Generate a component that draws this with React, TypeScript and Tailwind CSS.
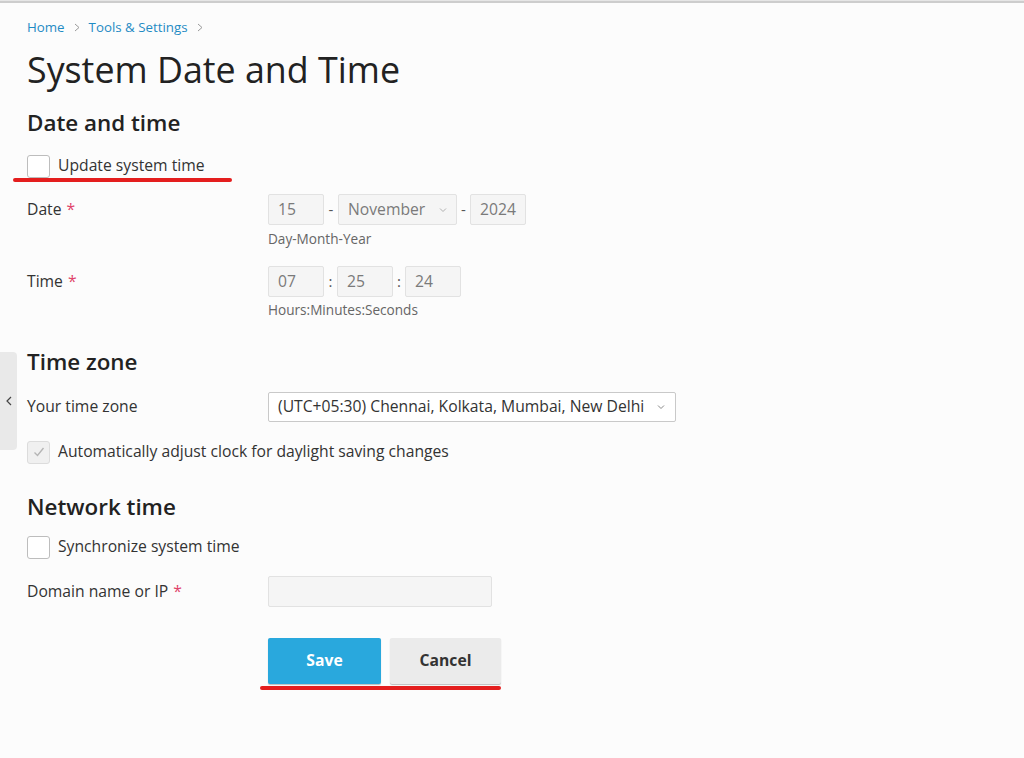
import React from "react";

const Chevron = ({ className = "" }: { className?: string }) => (
  <svg width="8" height="8" viewBox="0 0 8 8" className={className} fill="none" stroke="currentColor" strokeWidth="1">
    <path d="M1 2.5 L4 5.5 L7 2.5" />
  </svg>
);

const Box = ({ children, w }: { children: React.ReactNode; w: string }) => (
  <div className={`${w} h-[31px] border border-[#e2e2e2] bg-[#f5f5f5] rounded-[2px] flex items-center px-[9px] text-[15.7px] text-[#7a7a7a]`}>
    {children}
  </div>
);

const Star = () => <span className="text-[#e0436a] ml-[5px] text-[15.7px]">*</span>;

const Checkbox = ({ checked = false, disabled = false }: { checked?: boolean; disabled?: boolean }) => (
  <div
    className={`w-[23px] h-[23px] rounded-[3px] border flex items-center justify-center shrink-0 ${
      disabled ? "bg-[#f0f0f0] border-[#dcdcdc]" : "bg-white border-[#bdbdbd]"
    }`}
  >
    {checked && (
      <svg width="14" height="14" viewBox="0 0 14 14" fill="none" stroke="#b5b5b5" strokeWidth="1.4">
        <path d="M2.5 7.5 L5.5 10.5 L11.5 3" />
      </svg>
    )}
  </div>
);

export default function App() {
  return (
    <div
      className="relative w-[1024px] h-[758px] overflow-hidden bg-[#fcfcfc] text-[#333]"
      style={{ fontFamily: '"Open Sans", "Noto Sans", sans-serif' }}
    >
      <div className="h-[1px] bg-[#e6e6e6]" />
      <div className="h-[2px] bg-[#cdcdcd]" />

      {/* left collapse tab */}
      <div className="absolute left-0 top-[352px] w-[17px] h-[98px] bg-[#e9e9e9] rounded-r-[4px] flex items-center justify-center text-[#444]">
        <svg width="6" height="10" viewBox="0 0 6 10" fill="none" stroke="currentColor" strokeWidth="1.2">
          <path d="M5 1 L1 5 L5 9" />
        </svg>
      </div>

      <div className="pl-[27px]">
        {/* breadcrumb */}
        <div className="mt-[15px] flex items-center text-[13.3px] leading-[18px] text-[#1f8bc4]">
          <span>Home</span>
          <svg width="6" height="9" viewBox="0 0 6 9" className="mx-[9px]" fill="none" stroke="#9a9a9a" strokeWidth="1">
            <path d="M1 1 L5 4.5 L1 8" />
          </svg>
          <span>Tools &amp; Settings</span>
          <svg width="6" height="9" viewBox="0 0 6 9" className="mx-[9px]" fill="none" stroke="#9a9a9a" strokeWidth="1">
            <path d="M1 1 L5 4.5 L1 8" />
          </svg>
        </div>

        <h1 className="mt-[12px] text-[35.8px] leading-[43px] font-normal text-[#222]">System Date and Time</h1>

        <h2 className="mt-[17px] text-[22.4px] leading-[30px] font-semibold text-[#222]">Date and time</h2>

        <div className="relative mt-[16px] flex items-center h-[24px]">
          <Checkbox />
          <span className="ml-[8px] text-[15.7px]">Update system time</span>
          <div className="absolute left-[-14px] top-[24px] w-[219px] h-[4px] rounded-full bg-[#e41e1e]" />
        </div>

        {/* Date */}
        <div className="mt-[16px] flex items-center">
          <div className="w-[241px] text-[15.7px] flex items-center">Date<Star /></div>
          <Box w="w-[56px]">15</Box>
          <span className="w-[14px] text-center text-[15px] text-[#555]">-</span>
          <div className="w-[119px] h-[31px] border border-[#e2e2e2] bg-[#f5f5f5] rounded-[2px] flex items-center justify-between px-[9px] text-[15.7px] text-[#7a7a7a]">
            <span>November</span>
            <Chevron className="text-[#b0b0b0]" />
          </div>
          <span className="w-[13px] text-center text-[15px] text-[#555]">-</span>
          <Box w="w-[56px]">2024</Box>
        </div>
        <div className="mt-[5px] ml-[241px] text-[13.6px] leading-[18px] text-[#666]">Day-Month-Year</div>

        {/* Time */}
        <div className="mt-[18px] flex items-center">
          <div className="w-[241px] text-[15.7px] flex items-center">Time<Star /></div>
          <Box w="w-[56px]">07</Box>
          <span className="w-[13px] text-center text-[15px] text-[#555]">:</span>
          <Box w="w-[56px]">25</Box>
          <span className="w-[12px] text-center text-[15px] text-[#555]">:</span>
          <Box w="w-[56px]">24</Box>
        </div>
        <div className="mt-[4px] ml-[241px] text-[13.6px] leading-[18px] text-[#666]">Hours:Minutes:Seconds</div>

        <h2 className="mt-[28px] text-[22.4px] leading-[30px] font-semibold text-[#222]">Time zone</h2>

        <div className="mt-[15px] flex items-center">
          <div className="w-[241px] text-[15.7px]">Your time zone</div>
          <div className="w-[408px] h-[30px] border border-[#c9c9c9] bg-white rounded-[2px] flex items-center justify-between pl-[9px] pr-[10px] text-[15.7px] text-[#333]">
            <span>(UTC+05:30) Chennai, Kolkata, Mumbai, New Delhi</span>
            <Chevron className="text-[#888]" />
          </div>
        </div>

        <div className="mt-[18px] flex items-center h-[24px]">
          <Checkbox checked disabled />
          <span className="ml-[8px] text-[15.7px]">Automatically adjust clock for daylight saving changes</span>
        </div>

        <h2 className="mt-[28px] text-[22.4px] leading-[30px] font-semibold text-[#222]">Network time</h2>

        <div className="mt-[13px] flex items-center h-[24px]">
          <Checkbox />
          <span className="ml-[8px] text-[15.7px]">Synchronize system time</span>
        </div>

        <div className="mt-[17px] flex items-center">
          <div className="w-[241px] text-[15.7px] flex items-center">Domain name or IP<Star /></div>
          <div className="w-[224px] h-[31px] border border-[#e2e2e2] bg-[#f5f5f5] rounded-[2px]" />
        </div>

        <div className="relative mt-[31px] ml-[241px] flex gap-[9px]">
          <button className="w-[113px] h-[46px] bg-[#29a8dd] text-white text-[15.7px] font-bold rounded-[2px] shadow-[0_1px_1px_rgba(0,0,0,0.25)]">
            Save
          </button>
          <button className="w-[111px] h-[46px] bg-[#ebebeb] text-[#333] text-[15.7px] font-bold rounded-[2px] shadow-[0_1px_1px_rgba(0,0,0,0.25)]">
            Cancel
          </button>
          <div className="absolute left-[-8px] top-[48px] w-[241px] h-[4px] rounded-full bg-[#e41e1e]" />
        </div>
      </div>
    </div>
  );
}
